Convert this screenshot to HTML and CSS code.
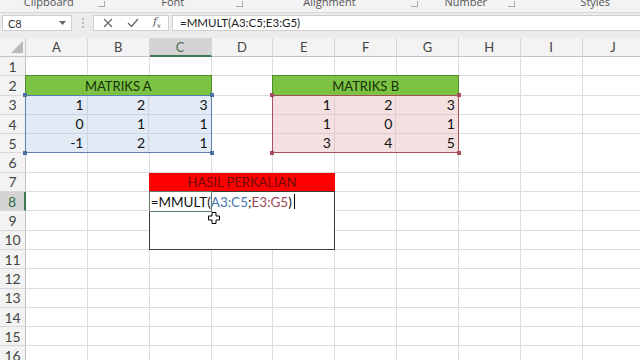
FILE: index.html
```html
<!DOCTYPE html>
<html lang="id">
<head>
    <meta charset="UTF-8">
    <meta name="viewport" content="width=device-width, initial-scale=1.0">
    <title>MMULT - Excel</title>
    <link rel="stylesheet" href="styles.css">
</head>
<body>
    <!-- Ribbon group labels (cut off at the top) -->
    <div class="ribbon">
        <div class="group group-clipboard"><span class="group-label">Clipboard</span><span class="launcher"></span></div>
        <div class="group group-font"><span class="group-label">Font</span><span class="launcher"></span></div>
        <div class="group group-align"><span class="group-label">Alignment</span><span class="launcher"></span></div>
        <div class="group group-number"><span class="group-label">Number</span><span class="launcher"></span></div>
        <div class="group group-styles"><span class="group-label">Styles</span></div>
    </div>

    <!-- Formula bar -->
    <div class="formula-bar">
        <div class="name-box">
            <span>C8</span>
            <svg class="caret-down" width="7" height="4" viewBox="0 0 7 4"><path d="M0 0h7L3.5 4z" fill="#666"/></svg>
        </div>
        <div class="grip"><i></i><i></i><i></i></div>
        <div class="fx-buttons">
            <svg width="10" height="10" viewBox="0 0 10 10"><path d="M1 1l8 8M9 1l-8 8" stroke="#666" stroke-width="1.2"/></svg>
            <svg width="12" height="10" viewBox="0 0 12 10"><path d="M1 5l3.5 3.5L11 1" stroke="#666" stroke-width="1.3" fill="none"/></svg>
            <span class="fx">f<sub>x</sub></span>
        </div>
        <div class="formula-input">=MMULT(A3:C5;E3:G5)</div>
    </div>

    <!-- Worksheet -->
    <div class="sheet">
        <div class="corner">
            <svg width="12" height="12" viewBox="0 0 12 12"><path d="M12 0v12H0z" fill="#b8b8b8"/></svg>
        </div>
        <div class="col-head">A</div>
        <div class="col-head">B</div>
        <div class="col-head selected">C</div>
        <div class="col-head">D</div>
        <div class="col-head">E</div>
        <div class="col-head">F</div>
        <div class="col-head">G</div>
        <div class="col-head">H</div>
        <div class="col-head">I</div>
        <div class="col-head">J</div>

        <div class="row-heads">
            <div class="row-head">1</div>
            <div class="row-head">2</div>
            <div class="row-head">3</div>
            <div class="row-head">4</div>
            <div class="row-head">5</div>
            <div class="row-head">6</div>
            <div class="row-head">7</div>
            <div class="row-head selected">8</div>
            <div class="row-head">9</div>
            <div class="row-head">10</div>
            <div class="row-head">11</div>
            <div class="row-head">12</div>
            <div class="row-head">13</div>
            <div class="row-head">14</div>
            <div class="row-head">15</div>
            <div class="row-head">16</div>
        </div>

        <div class="cells"></div>

        <div class="title title-a">MATRIKS A</div>
        <div class="title title-b">MATRIKS B</div>

        <div class="matrix matrix-a">
            <div class="num">1</div><div class="num">2</div><div class="num">3</div>
            <div class="num">0</div><div class="num">1</div><div class="num">1</div>
            <div class="num">-1</div><div class="num">2</div><div class="num">1</div>
            <span class="handle tl"></span><span class="handle tr"></span>
            <span class="handle bl"></span><span class="handle br"></span>
        </div>

        <div class="matrix matrix-b">
            <div class="num">1</div><div class="num">2</div><div class="num">3</div>
            <div class="num">1</div><div class="num">0</div><div class="num">1</div>
            <div class="num">3</div><div class="num">4</div><div class="num">5</div>
            <span class="handle tl"></span><span class="handle tr"></span>
            <span class="handle bl"></span><span class="handle br"></span>
        </div>

        <div class="title title-result">HASIL PERKALIAN</div>

        <div class="result-box">
            <div class="edit-row">
                <span class="active-cell"></span>
                <span class="edit-text">=MMULT(<span class="ref-a">A3:C5</span>;<span class="ref-b">E3:G5</span>)</span><span class="text-caret"></span>
            </div>
            <svg class="mouse" width="12" height="12" viewBox="0 0 12 12">
                <path d="M4 .5h4v3.5h3.5v4H8v3.5H4V8H.5V4H4z" fill="#fff" stroke="#000" stroke-width="1"/>
            </svg>
        </div>
    </div>
</body>
</html>
```

FILE: styles.css
```css
/* Page */
body {
    margin: 0;
    width: 640px;
    height: 360px;
    overflow: hidden;
    font-family: Lato, "Open Sans", sans-serif;
    background-color: #ececec;
}

/* Ribbon group labels */
.ribbon {
    display: flex;
    height: 12px;
    overflow: hidden;
    background-color: #f3f3f3;
    border-bottom: 1px solid #d6d6d6;
}

.group {
    display: flex;
    align-items: flex-start;
}

.group-label {
    flex: 1;
    text-align: center;
    margin-top: -5px;
    font-family: "Open Sans", sans-serif;
    font-size: 11px;
    line-height: 13px;
    color: #555;
}

.launcher {
    width: 6px;
    height: 5px;
    margin: 1px 5px 0 0;
    border-right: 1px solid #aaa;
    border-bottom: 1px solid #aaa;
}

.group-clipboard { width: 115px; }
.group-font { width: 145px; }
.group-align { width: 184px; }
.group-number { width: 102px; }
.group-styles { width: 94px; padding-left: 30px; }

/* Formula bar */
.formula-bar {
    display: flex;
    align-items: center;
    height: 18px;
    padding: 1px 0 6px 2px;
    background-color: #ececec;
}

.name-box,
.fx-buttons,
.formula-input {
    height: 16px;
    box-sizing: border-box;
    background-color: #fff;
    border: 1px solid #cfcfcf;
}

.name-box {
    display: flex;
    align-items: center;
    justify-content: space-between;
    width: 70px;
    padding: 0 5px;
    font-size: 11px;
    color: #333;
}

.grip {
    display: flex;
    flex-direction: column;
    gap: 2px;
    width: 21px;
    align-items: center;
}

.grip i {
    width: 2px;
    height: 2px;
    background-color: #bdbdbd;
}

.fx-buttons {
    display: flex;
    align-items: center;
    gap: 14px;
    width: 76px;
    padding-left: 9px;
}

.fx {
    font-family: "DejaVu Serif", serif;
    font-style: italic;
    font-size: 11px;
    color: #555;
}

.fx sub {
    font-size: 7px;
}

.formula-input {
    flex: 1;
    margin-left: 3px;
    padding-left: 7px;
    border-right: none;
    font-size: 11.5px;
    line-height: 14px;
    color: #222;
}

/* Worksheet grid */
.sheet {
    display: grid;
    grid-template-columns: 26px repeat(10, 61.85px);
    grid-template-rows: 19px repeat(16, 19.3px);
    background-color: #fff;
}

.corner {
    display: flex;
    align-items: flex-end;
    justify-content: flex-end;
    padding: 0 2px 3px 0;
    background-color: #f3f3f3;
    border-right: 1px solid #cacaca;
    border-bottom: 1px solid #c4c4c4;
}

.col-head {
    display: flex;
    align-items: center;
    justify-content: center;
    background-color: #f3f3f3;
    border-right: 1px solid #d6d6d6;
    border-bottom: 1px solid #c4c4c4;
    font-size: 13px;
    color: #444;
}

.col-head.selected {
    background-color: #d4d4d4;
    color: #4c6a58;
    border-bottom: 2px solid #3f7755;
}

.row-heads {
    grid-area: 2 / 1 / 18 / 2;
    display: flex;
    flex-direction: column;
    background-color: #f3f3f3;
    border-right: 1px solid #c4c4c4;
}

.row-head {
    flex: 0 0 19.3px;
    box-sizing: border-box;
    display: flex;
    align-items: center;
    justify-content: center;
    border-bottom: 1px solid #d8d8d8;
    font-size: 14px;
    color: #444;
}

.row-head.selected {
    background-color: #d4d4d4;
    color: #2f6b45;
    margin-right: -1px;
    border-right: 2px solid #3f7755;
}

.cells {
    grid-area: 2 / 2 / 18 / 12;
    background-image:
        repeating-linear-gradient(to right, transparent 0 60.85px, #dcdcdc 60.85px 61.85px),
        repeating-linear-gradient(to bottom, transparent 0 18.3px, #dcdcdc 18.3px 19.3px);
}

/* Headers of the tables */
.title {
    display: flex;
    align-items: center;
    justify-content: center;
    margin: -1px 0 0 -1px;
    font-size: 13px;
    color: #14300a;
}

.title-a,
.title-b {
    background-color: #7cc243;
    border: 1px solid #4f8a2c;
    border-bottom: none;
}

.title-a { grid-area: 3 / 2 / 4 / 5; }
.title-b { grid-area: 3 / 6 / 4 / 9; }

.title-result {
    grid-area: 8 / 4 / 9 / 7;
    background-color: #ff0000;
    color: #6e0b0b;
    margin: 0 0 0 -1px;
}

/* Matrices with range highlight */
.matrix {
    position: relative;
    display: grid;
    grid-template-columns: repeat(3, 1fr);
    grid-template-rows: repeat(3, 1fr);
    margin: -1px 0 0 -1px;
}

.matrix-a {
    grid-area: 4 / 2 / 7 / 5;
    background-color: #e2eaf6;
    border: 1px solid #5b7fb0;
    --handle: #4d72a6;
}

.matrix-b {
    grid-area: 4 / 6 / 7 / 9;
    background-color: #f4e0e1;
    border: 1px solid #a4505c;
    --handle: #a4505c;
}

.num {
    display: flex;
    align-items: center;
    justify-content: flex-end;
    padding-right: 3px;
    border-right: 1px solid #ccd4de;
    border-bottom: 1px solid #ccd4de;
    font-size: 14px;
    color: #111;
}

.matrix-b .num {
    border-color: #dfcccd;
}

.num:nth-child(3n) {
    border-right: none;
}

.num:nth-child(n+7) {
    border-bottom: none;
}

.handle {
    position: absolute;
    width: 4px;
    height: 4px;
    background-color: var(--handle);
}

.handle.tl { top: -3px; left: -3px; }
.handle.tr { top: -3px; right: -3px; }
.handle.bl { bottom: -3px; left: -3px; }
.handle.br { bottom: -3px; right: -3px; }

/* Result block in edit mode */
.result-box {
    position: relative;
    grid-area: 9 / 4 / 12 / 7;
    margin: -1px 0 0 -1px;
    border: 1px solid #3b3b3b;
    background-color: #fff;
}

.edit-row {
    position: relative;
    display: flex;
    align-items: center;
    height: 19px;
}

.active-cell {
    position: absolute;
    top: -1px;
    left: -1px;
    width: 61px;
    height: 19px;
    border: 1px solid #5c7a66;
}

.edit-text {
    padding-left: 1px;
    font-size: 13.5px;
    color: #111;
}

.ref-a { color: #4a76b0; }
.ref-b { color: #a04a55; }

.text-caret {
    width: 1px;
    height: 15px;
    margin-left: 2px;
    background-color: #000;
}

.mouse {
    position: absolute;
    left: 58px;
    top: 20px;
}
```
